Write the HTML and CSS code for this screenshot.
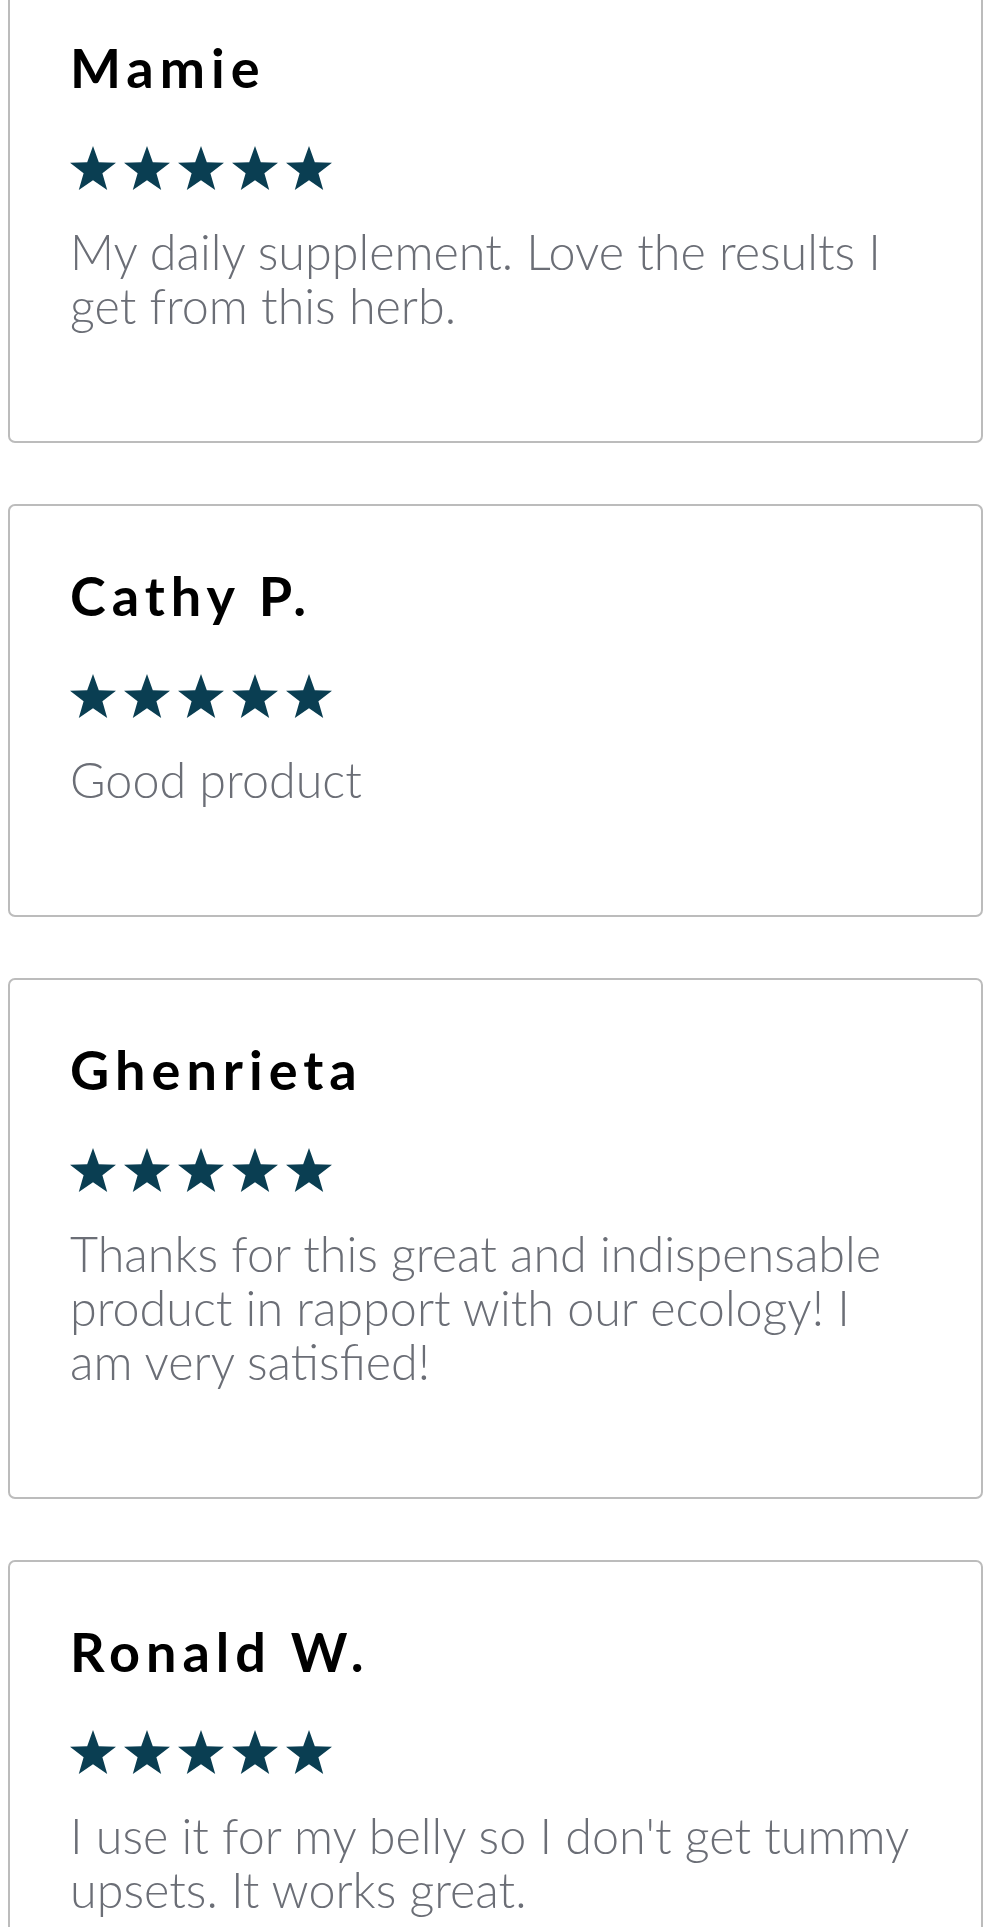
FILE: index.html
```html
<!DOCTYPE html>
<html lang="en">
<head>
<meta charset="utf-8">
<title>Reviews</title>
<link rel="stylesheet" href="styles.css">
</head>
<body>
<div class="reviews">
  <div class="card first">
    <div class="name">Mamie</div>
    <div class="stars">
      <svg viewBox="0.59 0 22.82 21.71"><polygon points="12,0 14.88,8.04 23.41,8.29 16.66,13.51 19.05,21.71 12,16.9 4.95,21.71 7.34,13.51 0.59,8.29 9.12,8.04"/></svg>
      <svg viewBox="0.59 0 22.82 21.71"><polygon points="12,0 14.88,8.04 23.41,8.29 16.66,13.51 19.05,21.71 12,16.9 4.95,21.71 7.34,13.51 0.59,8.29 9.12,8.04"/></svg>
      <svg viewBox="0.59 0 22.82 21.71"><polygon points="12,0 14.88,8.04 23.41,8.29 16.66,13.51 19.05,21.71 12,16.9 4.95,21.71 7.34,13.51 0.59,8.29 9.12,8.04"/></svg>
      <svg viewBox="0.59 0 22.82 21.71"><polygon points="12,0 14.88,8.04 23.41,8.29 16.66,13.51 19.05,21.71 12,16.9 4.95,21.71 7.34,13.51 0.59,8.29 9.12,8.04"/></svg>
      <svg viewBox="0.59 0 22.82 21.71"><polygon points="12,0 14.88,8.04 23.41,8.29 16.66,13.51 19.05,21.71 12,16.9 4.95,21.71 7.34,13.51 0.59,8.29 9.12,8.04"/></svg>
    </div>
    <p class="text">My daily supplement. Love the results I<br>get from this herb.</p>
  </div>
  <div class="card">
    <div class="name">Cathy P.</div>
    <div class="stars">
      <svg viewBox="0.59 0 22.82 21.71"><polygon points="12,0 14.88,8.04 23.41,8.29 16.66,13.51 19.05,21.71 12,16.9 4.95,21.71 7.34,13.51 0.59,8.29 9.12,8.04"/></svg>
      <svg viewBox="0.59 0 22.82 21.71"><polygon points="12,0 14.88,8.04 23.41,8.29 16.66,13.51 19.05,21.71 12,16.9 4.95,21.71 7.34,13.51 0.59,8.29 9.12,8.04"/></svg>
      <svg viewBox="0.59 0 22.82 21.71"><polygon points="12,0 14.88,8.04 23.41,8.29 16.66,13.51 19.05,21.71 12,16.9 4.95,21.71 7.34,13.51 0.59,8.29 9.12,8.04"/></svg>
      <svg viewBox="0.59 0 22.82 21.71"><polygon points="12,0 14.88,8.04 23.41,8.29 16.66,13.51 19.05,21.71 12,16.9 4.95,21.71 7.34,13.51 0.59,8.29 9.12,8.04"/></svg>
      <svg viewBox="0.59 0 22.82 21.71"><polygon points="12,0 14.88,8.04 23.41,8.29 16.66,13.51 19.05,21.71 12,16.9 4.95,21.71 7.34,13.51 0.59,8.29 9.12,8.04"/></svg>
    </div>
    <p class="text">Good product</p>
  </div>
  <div class="card">
    <div class="name">Ghenrieta</div>
    <div class="stars">
      <svg viewBox="0.59 0 22.82 21.71"><polygon points="12,0 14.88,8.04 23.41,8.29 16.66,13.51 19.05,21.71 12,16.9 4.95,21.71 7.34,13.51 0.59,8.29 9.12,8.04"/></svg>
      <svg viewBox="0.59 0 22.82 21.71"><polygon points="12,0 14.88,8.04 23.41,8.29 16.66,13.51 19.05,21.71 12,16.9 4.95,21.71 7.34,13.51 0.59,8.29 9.12,8.04"/></svg>
      <svg viewBox="0.59 0 22.82 21.71"><polygon points="12,0 14.88,8.04 23.41,8.29 16.66,13.51 19.05,21.71 12,16.9 4.95,21.71 7.34,13.51 0.59,8.29 9.12,8.04"/></svg>
      <svg viewBox="0.59 0 22.82 21.71"><polygon points="12,0 14.88,8.04 23.41,8.29 16.66,13.51 19.05,21.71 12,16.9 4.95,21.71 7.34,13.51 0.59,8.29 9.12,8.04"/></svg>
      <svg viewBox="0.59 0 22.82 21.71"><polygon points="12,0 14.88,8.04 23.41,8.29 16.66,13.51 19.05,21.71 12,16.9 4.95,21.71 7.34,13.51 0.59,8.29 9.12,8.04"/></svg>
    </div>
    <p class="text">Thanks for this great and indispensable<br>product in rapport with our ecology! I<br>am very satisfied!</p>
  </div>
  <div class="card">
    <div class="name">Ronald W.</div>
    <div class="stars">
      <svg viewBox="0.59 0 22.82 21.71"><polygon points="12,0 14.88,8.04 23.41,8.29 16.66,13.51 19.05,21.71 12,16.9 4.95,21.71 7.34,13.51 0.59,8.29 9.12,8.04"/></svg>
      <svg viewBox="0.59 0 22.82 21.71"><polygon points="12,0 14.88,8.04 23.41,8.29 16.66,13.51 19.05,21.71 12,16.9 4.95,21.71 7.34,13.51 0.59,8.29 9.12,8.04"/></svg>
      <svg viewBox="0.59 0 22.82 21.71"><polygon points="12,0 14.88,8.04 23.41,8.29 16.66,13.51 19.05,21.71 12,16.9 4.95,21.71 7.34,13.51 0.59,8.29 9.12,8.04"/></svg>
      <svg viewBox="0.59 0 22.82 21.71"><polygon points="12,0 14.88,8.04 23.41,8.29 16.66,13.51 19.05,21.71 12,16.9 4.95,21.71 7.34,13.51 0.59,8.29 9.12,8.04"/></svg>
      <svg viewBox="0.59 0 22.82 21.71"><polygon points="12,0 14.88,8.04 23.41,8.29 16.66,13.51 19.05,21.71 12,16.9 4.95,21.71 7.34,13.51 0.59,8.29 9.12,8.04"/></svg>
    </div>
    <p class="text">I use it for my belly so I don't get tummy<br>upsets. It works great.</p>
  </div>
</div>
</body>
</html>
```
FILE: styles.css
```css
html, body {
  margin: 0;
  padding: 0;
  background: #ffffff;
}

body {
  overflow: hidden;
  height: 1927px;
}

.reviews {
  display: flex;
  flex-direction: column;
  gap: 61px;
  padding: 0 4px 0 8px;
}

.card {
  border: 2px solid #bcbcbc;
  border-radius: 7px;
  padding: 63px 30px 109px 60px;
  background: #ffffff;
}

.card.first {
  margin-top: -24px;
}

.name {
  font-family: Lato, "Open Sans", sans-serif;
  font-weight: 700;
  font-size: 54px;
  line-height: 54px;
  letter-spacing: 6px;
  color: #000000;
}

.stars {
  display: flex;
  gap: 8px;
  margin-top: 51px;
  height: 44px;
}

.stars svg {
  width: 46px;
  height: 44px;
  fill: #0a3e52;
  display: block;
}

.text {
  margin: 34px 0 0 0;
  font-family: Lato, "Open Sans", sans-serif;
  font-weight: 300;
  font-size: 48.5px;
  line-height: 54px;
  color: #6b6e76;
  white-space: nowrap;
}
```
